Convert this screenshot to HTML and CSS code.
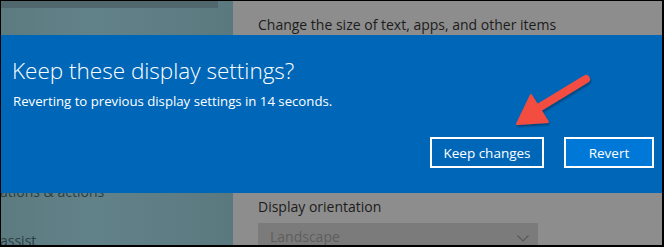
FILE: index.html
```html
<!DOCTYPE html>
<html lang="en">
<head>
    <meta charset="UTF-8">
    <meta name="viewport" content="width=device-width, initial-scale=1.0">
    <title>Display settings</title>
    <link rel="stylesheet" href="styles.css">
</head>
<body>
    <div class="screen">
        <!-- Settings window behind the dialog -->
        <div class="settings">
            <div class="sidebar">
                <div class="sidebar-top"></div>
                <div class="nav-item nav-actions">ations &amp; actions</div>
                <div class="nav-item nav-assist">assist</div>
            </div>
            <div class="main">
                <div class="main-label">Change the size of text, apps, and other items</div>
                <div class="main-label orientation-label">Display orientation</div>
                <div class="dropdown">
                    <span>Landscape</span>
                    <svg class="chevron" width="12" height="7" viewBox="0 0 12 7">
                        <path d="M0.5 0.5 L6 6 L11.5 0.5" fill="none" stroke="#5a5a5a" stroke-width="1.2"/>
                    </svg>
                </div>
            </div>
        </div>

        <!-- Confirmation dialog -->
        <div class="dialog">
            <h1>Keep these display settings?</h1>
            <p>Reverting to previous display settings in 14 seconds.</p>
            <div class="dialog-buttons">
                <button class="btn btn-outline">Keep changes</button>
                <button class="btn btn-primary">Revert</button>
            </div>
        </div>

        <!-- Annotation arrow -->
        <svg class="arrow" width="100" height="70" viewBox="0 0 100 70">
            <defs>
                <filter id="shadow" x="-20%" y="-20%" width="140%" height="140%">
                    <feDropShadow dx="1" dy="2" stdDeviation="1.2" flood-color="#000" flood-opacity="0.35"/>
                </filter>
            </defs>
            <g filter="url(#shadow)" fill="#f24d3f">
                <path d="M84 14 L38 42" stroke="#f24d3f" stroke-width="8" stroke-linecap="round"/>
                <path d="M29 30 L15 59 L46 57 Z" stroke="#f24d3f" stroke-width="2" stroke-linejoin="round"/>
            </g>
        </svg>
    </div>
</body>
</html>
```

FILE: styles.css
```css
body {
    margin: 0;
    font-family: "Open Sans", "Noto Sans", sans-serif;
    background-color: #000;
}
.screen {
    position: relative;
    width: 664px;
    height: 247px;
    box-sizing: border-box;
    border-style: solid;
    border-color: #000;
    border-width: 1px 2px 2px 1px;
    overflow: hidden;
}
.settings {
    display: grid;
    grid-template-columns: 232px 1fr;
    height: 100%;
}
.sidebar {
    background: linear-gradient(90deg, #5c7b80 0%, #62828a 40%, #5a797f 100%);
    position: relative;
}
.sidebar-top {
    width: 217px;
    height: 7px;
    background-color: #4f676d;
}
.nav-item {
    color: #2b3e42;
    font-size: 14px;
    position: absolute;
    left: -1px;
}
.nav-actions {
    top: 181px;
}
.nav-assist {
    top: 230px;
}
.main {
    background-color: #8d8d8d;
    padding-left: 25px;
}
.main-label {
    color: #1c1c1c;
    font-size: 14px;
    margin-top: 14px;
}
.orientation-label {
    margin-top: 163px;
}
.dropdown {
    margin-top: 7px;
    width: 280px;
    height: 26px;
    background-color: #7b7b7b;
    display: flex;
    justify-content: space-between;
    align-items: center;
    padding: 0 9px 0 12px;
    box-sizing: border-box;
    color: #5e5e5e;
    font-size: 14px;
}
.chevron {
    margin-top: 4px;
}
/* Dialog */
.dialog {
    position: absolute;
    top: 34px;
    left: 0;
    right: 0;
    height: 158px;
    background-color: #0067b8;
    color: #fff;
    padding: 0 8px 0 11px;
    box-sizing: border-box;
}
.dialog h1 {
    font-weight: 300;
    font-size: 22.5px;
    margin: 20px 0 0 0;
}
.dialog p {
    font-size: 13.2px;
    margin: 6px 0 0 1px;
}
.dialog-buttons {
    display: flex;
    justify-content: flex-end;
    gap: 20px;
    margin-top: 27px;
}
.btn {
    font-family: "Open Sans", "Noto Sans", sans-serif;
    font-size: 13.5px;
    color: #fff;
    height: 31px;
    border: 2px solid #fff;
    cursor: pointer;
}
.btn-outline {
    background-color: transparent;
    width: 114px;
}
.btn-primary {
    background-color: #0078d7;
    width: 90px;
}
.arrow {
    position: absolute;
    left: 501px;
    top: 64px;
}
```
